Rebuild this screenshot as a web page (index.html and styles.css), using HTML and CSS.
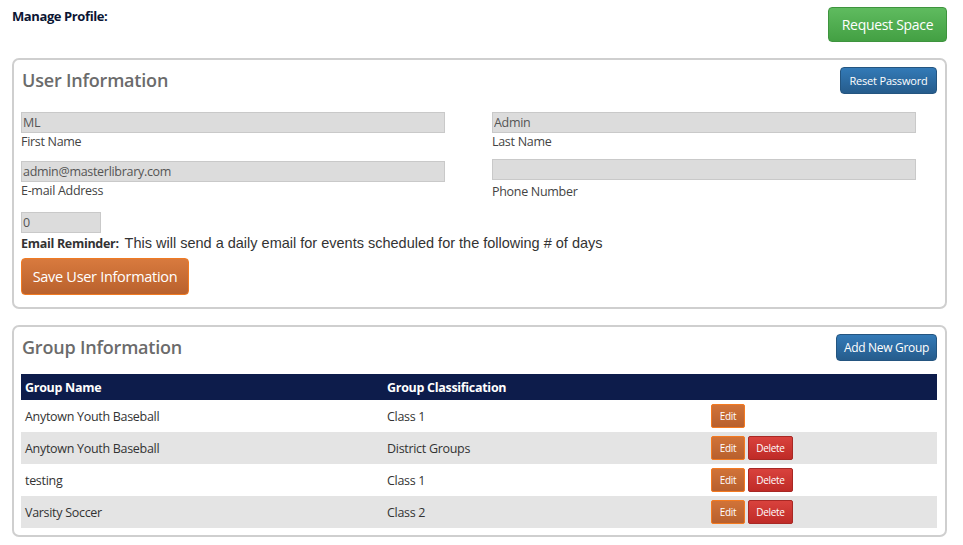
FILE: index.html
```html
<!DOCTYPE html>
<html lang="en">

<head>
    <meta charset="UTF-8">
    <meta name="viewport" content="width=device-width, initial-scale=1.0">
    <title>Manage Profile</title>
    <link rel="stylesheet" href="styles.css">
</head>

<body>
    <div class="page">
        <div class="top-bar">
            <div class="page-title">Manage Profile:</div>
            <button class="btn btn-green">Request Space</button>
        </div>

        <div class="panel">
            <div class="panel-head">
                <h2>User Information</h2>
                <button class="btn btn-blue btn-reset">Reset Password</button>
            </div>
            <div class="form-grid">
                <div class="field">
                    <input type="text" value="ML">
                    <label>First Name</label>
                </div>
                <div class="field">
                    <input type="text" value="Admin">
                    <label>Last Name</label>
                </div>
                <div class="field">
                    <input type="text" value="admin@masterlibrary.com">
                    <label>E-mail Address</label>
                </div>
                <div class="field field-phone">
                    <input type="text" value="">
                    <label>Phone Number</label>
                </div>
            </div>
            <div class="reminder">
                <input type="text" value="0" class="small-input">
                <div class="reminder-text"><b>Email Reminder:</b>&nbsp; <span>This will send a daily email for events scheduled for the following # of days</span></div>
            </div>
            <button class="btn btn-orange btn-save">Save User Information</button>
        </div>

        <div class="panel panel-groups">
            <div class="panel-head">
                <h2>Group Information</h2>
                <button class="btn btn-blue btn-add">Add New Group</button>
            </div>
            <table class="groups">
                <thead>
                    <tr>
                        <th class="c1">Group Name</th>
                        <th class="c2">Group Classification</th>
                        <th></th>
                    </tr>
                </thead>
                <tbody>
                    <tr>
                        <td>Anytown Youth Baseball</td>
                        <td>Class 1</td>
                        <td><button class="btn-sm btn-edit">Edit</button></td>
                    </tr>
                    <tr>
                        <td>Anytown Youth Baseball</td>
                        <td>District Groups</td>
                        <td><button class="btn-sm btn-edit">Edit</button><button class="btn-sm btn-del">Delete</button></td>
                    </tr>
                    <tr>
                        <td>testing</td>
                        <td>Class 1</td>
                        <td><button class="btn-sm btn-edit">Edit</button><button class="btn-sm btn-del">Delete</button></td>
                    </tr>
                    <tr>
                        <td>Varsity Soccer</td>
                        <td>Class 2</td>
                        <td><button class="btn-sm btn-edit">Edit</button><button class="btn-sm btn-del">Delete</button></td>
                    </tr>
                </tbody>
            </table>
        </div>
    </div>
</body>

</html>
```

FILE: styles.css
```css
html,
body {
    margin: 0;
    background-color: #fff;
    font-family: 'Open Sans', 'Noto Sans', sans-serif;
    font-size: 12.5px;
    letter-spacing: -0.3px;
    color: #333;
}

.page {
    padding: 7px 16px 0 12px;
}

.top-bar {
    display: flex;
    justify-content: space-between;
    align-items: flex-start;
    margin-bottom: 16px;
}

.page-title {
    font-weight: bold;
    font-size: 13px;
    line-height: 18px;
    color: #0b1533;
    letter-spacing: -0.4px;
}

.btn {
    font-family: 'Open Sans', 'Noto Sans', sans-serif;
    color: #fff;
    border-radius: 4px;
    cursor: pointer;
    padding: 0;
    white-space: nowrap;
    box-sizing: border-box;
}

.btn-green {
    height: 35px;
    width: 119px;
    font-size: 14px;
    letter-spacing: -0.3px;
    background: linear-gradient(#5fbb5f, #43a043);
    border: 1px solid #3e943e;
}

.btn-blue {
    height: 27px;
    font-size: 11px;
    letter-spacing: -0.2px;
    background: linear-gradient(#337ab7, #265c8c);
    border: 1px solid #245580;
    margin-top: 1px;
}

.btn-reset {
    width: 97px;
}

.btn-add {
    width: 101px;
    font-size: 12px;
    letter-spacing: -0.3px;
}

.btn-orange {
    background: linear-gradient(#d87a3e, #b9612d);
    border: 1px solid #f07a22;
}

.panel {
    border: 2px solid #cfcfcf;
    border-radius: 7px;
    padding: 6px 8px 12px 7px;
    margin-bottom: 16px;
}

.panel-head {
    display: flex;
    justify-content: space-between;
    align-items: flex-start;
    margin-bottom: 18px;
}

.panel-head h2 {
    margin: 2px 0 0 1px;
    font-size: 18px;
    font-weight: 600;
    line-height: 24px;
    letter-spacing: -0.2px;
    color: #6b6b6b;
}

.form-grid {
    display: grid;
    grid-template-columns: 471px 1fr;
    row-gap: 10px;
}

.field input,
.small-input {
    display: block;
    box-sizing: border-box;
    width: 424px;
    height: 21px;
    margin: 0;
    padding: 0 1px;
    background-color: #dcdcdc;
    border: 1px solid #c9c9c9;
    font-family: 'Open Sans', 'Noto Sans', sans-serif;
    font-size: 12.5px;
    letter-spacing: -0.3px;
    color: #555;
}

.field label {
    display: block;
    line-height: 18px;
    color: #444;
}

.field-phone {
    margin-top: -2px;
}

.field-phone label {
    margin-top: 3px;
}

.reminder {
    margin-top: 11px;
}

.small-input {
    width: 80px;
}

.reminder-text {
    line-height: 20px;
    color: #333;
}

.reminder-text span {
    font-family: 'Liberation Sans', Arial, sans-serif;
    font-size: 14.5px;
    letter-spacing: 0;
}

.btn-save {
    margin-top: 4px;
    height: 37px;
    width: 168px;
    font-size: 14.5px;
    letter-spacing: -0.3px;
}

.panel-groups {
    padding-bottom: 7px;
}

.panel-groups .panel-head {
    margin-bottom: 13px;
}

.groups {
    width: 100%;
    border-collapse: collapse;
}

.groups th {
    background-color: #0d1c4b;
    color: #fff;
    text-align: left;
    height: 26px;
    padding: 0 4px;
}

.groups .c1 {
    width: 354px;
}

.groups .c2 {
    width: 316px;
}

.groups td {
    height: 32px;
    padding: 0 4px;
    color: #333;
}

.groups tbody tr:nth-child(even) td {
    background-color: #e4e4e4;
}

.btn-sm {
    height: 24px;
    padding: 0;
    margin-right: 3px;
    border-radius: 2px;
    font-family: 'Open Sans', 'Noto Sans', sans-serif;
    font-size: 10px;
    letter-spacing: -0.3px;
    color: #fff;
    cursor: pointer;
    vertical-align: middle;
    box-sizing: border-box;
}

.btn-edit {
    width: 34px;
    background: linear-gradient(#d17338, #b8602e);
    border: 1px solid #f47a20;
}

.btn-del {
    width: 45px;
    background: linear-gradient(#d9423d, #bf2b27);
    border: 1px solid #a82824;
}
```
